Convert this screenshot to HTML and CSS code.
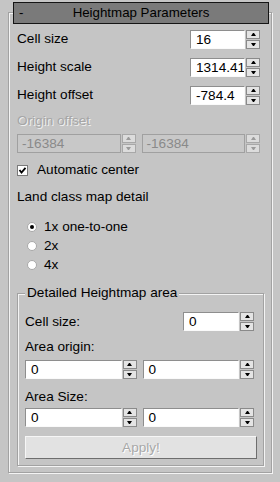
FILE: index.html
```html
<!DOCTYPE html>
<html>
<head>
<meta charset="utf-8">
<link rel="stylesheet" href="styles.css">
</head>
<body>
<div class="app">
  <div class="header"><span class="collapse">-</span><span class="title">Heightmap Parameters</span><span></span></div>
  <div class="rollout">
    <div class="row"><span>Cell size</span>
      <div class="spinner"><div class="field">16</div><div class="btns"><span class="btn up"></span><span class="btn down"></span></div></div>
    </div>
    <div class="row"><span>Height scale</span>
      <div class="spinner"><div class="field">1314.41</div><div class="btns"><span class="btn up"></span><span class="btn down"></span></div></div>
    </div>
    <div class="row"><span>Height offset</span>
      <div class="spinner"><div class="field">-784.4</div><div class="btns"><span class="btn up"></span><span class="btn down"></span></div></div>
    </div>
    <div class="label disabled origin">Origin offset</div>
    <div class="pair">
      <div class="spinner off"><div class="field">-16384</div><div class="btns"><span class="btn up"></span><span class="btn down"></span></div></div>
      <div class="spinner off"><div class="field">-16384</div><div class="btns"><span class="btn up"></span><span class="btn down"></span></div></div>
    </div>
    <div class="check">
      <svg width="11" height="11" viewBox="0 0 11 11"><rect x="0.5" y="0.5" width="10" height="10" fill="#fff" stroke="#7a7a7a"/><polyline points="2.5,5 4.5,7.5 8.5,2.8" fill="none" stroke="#000" stroke-width="1.8"/></svg>
      <span>Automatic center</span>
    </div>
    <div class="label land">Land class map detail</div>
    <div class="radios">
      <div class="radio"><svg width="10" height="10" viewBox="0 0 10 10"><circle cx="5" cy="5" r="4.5" fill="#fff" stroke="#a8a8a8"/><circle cx="5" cy="5" r="2" fill="#000"/></svg><span>1x one-to-one</span></div>
      <div class="radio"><svg width="10" height="10" viewBox="0 0 10 10"><circle cx="5" cy="5" r="4.5" fill="#fff" stroke="#a8a8a8"/></svg><span>2x</span></div>
      <div class="radio"><svg width="10" height="10" viewBox="0 0 10 10"><circle cx="5" cy="5" r="4.5" fill="#fff" stroke="#a8a8a8"/></svg><span>4x</span></div>
    </div>
    <fieldset class="group">
      <legend>Detailed Heightmap area</legend>
      <div class="grow"><span>Cell size:</span>
        <div class="spinner small"><div class="field">0</div><div class="btns"><span class="btn up"></span><span class="btn down"></span></div></div>
      </div>
      <div class="label area-origin">Area origin:</div>
      <div class="pair p1">
        <div class="spinner"><div class="field">0</div><div class="btns"><span class="btn up"></span><span class="btn down"></span></div></div>
        <div class="spinner"><div class="field">0</div><div class="btns"><span class="btn up"></span><span class="btn down"></span></div></div>
      </div>
      <div class="label area-size">Area Size:</div>
      <div class="pair p2">
        <div class="spinner"><div class="field">0</div><div class="btns"><span class="btn up"></span><span class="btn down"></span></div></div>
        <div class="spinner"><div class="field">0</div><div class="btns"><span class="btn up"></span><span class="btn down"></span></div></div>
      </div>
      <div class="apply">Apply!</div>
    </fieldset>
  </div>
</div>
</body>
</html>
```
FILE: styles.css
```css
* { box-sizing: border-box; }
html, body { margin: 0; }
body {
  width: 280px;
  height: 482px;
  overflow: hidden;
  background: #c5c5c5;
  font: 13.6px/16px "Liberation Sans", Arial, sans-serif;
  color: #000;
}
.app { padding-top: 2px; }
.header {
  position: relative;
  z-index: 1;
  margin: 0 11px 0 13px;
  height: 22px;
  background: #7a7a7a;
  border: 1px solid #151515;
  display: grid;
  grid-template-columns: 1fr auto 1fr;
  align-items: center;
  font-size: 13.3px;
}
.collapse { padding-left: 5px; }
.rollout {
  margin: -12px 8px 0;
  border: 1px solid #a2a2a2;
  box-shadow: 1px 1px 0 #f4f4f4, inset 1px 1px 0 #f4f4f4;
  padding: 16px 11px 6px 8px;
}
.row {
  display: flex;
  justify-content: space-between;
  align-items: center;
  height: 20px;
  margin-bottom: 8px;
}
.spinner {
  display: flex;
  gap: 1px;
  height: 19px;
  width: 70px;
}
.spinner.small { width: 71px; }
.field {
  flex: 1;
  min-width: 0;
  background: #fff;
  border: 1px solid;
  border-color: #8e8e8e #fafafa #fafafa #8e8e8e;
  padding-left: 5px;
  line-height: 17px;
  overflow: hidden;
  white-space: nowrap;
}
.btns {
  width: 14px;
  display: flex;
  flex-direction: column;
  gap: 1px;
}
.btn {
  flex: 1;
  background: #e4e4e4;
  border: 1px solid #8a8a8a;
  display: flex;
  align-items: center;
  justify-content: center;
}
.btn::after {
  content: "";
  width: 1px;
  border-left: 2px solid transparent;
  border-right: 2px solid transparent;
}
.btn.up::after { border-bottom: 3px solid #000; }
.btn.down::after { border-top: 3px solid #000; }
.label { height: 16px; }
.disabled { color: #a6a6a6; text-shadow: 1px 1px 0 #f0f0f0; }
.origin { margin-top: 0; }
.pair {
  display: grid;
  grid-template-columns: 1fr 1fr;
  column-gap: 6px;
  height: 19px;
  margin-top: 5px;
}
.pair .spinner { width: auto; }
.spinner.off .field {
  background: #c8c8c8;
  border-color: #a0a0a0;
  color: #8a8a8a;
  padding-left: 4px;
}
.spinner.off .btn { background: #dcdcdc; border-color: #a8a8a8; }
.spinner.off .btn.up::after { border-bottom-color: #9a9a9a; }
.spinner.off .btn.down::after { border-top-color: #9a9a9a; }
.check {
  display: flex;
  align-items: center;
  gap: 9px;
  height: 16px;
  margin-top: 9px;
}
.check svg, .radio svg { display: block; flex: none; }
.land { margin-top: 11px; }
.radios { margin-top: 12px; padding-left: 10px; }
.radio {
  display: flex;
  align-items: center;
  gap: 7px;
  height: 19px;
}
.group {
  margin: 11px -4px 0 0;
  padding: 11px 9px 6px 7px;
  border: 1px solid #a2a2a2;
  box-shadow: 1px 1px 0 #f4f4f4, inset 1px 1px 0 #f4f4f4;
  min-width: 0;
}
.group legend {
  padding: 0 2px;
  background: #c5c5c5;
  line-height: 16px;
}
.grow {
  display: flex;
  justify-content: space-between;
  align-items: center;
  height: 19px;
}
.area-origin { margin-top: 8px; }
.p1 { margin-top: 5px; }
.area-size { margin-top: 10px; }
.p2 { margin-top: 3px; }
.apply {
  margin: 9px -3px 0 0;
  height: 23px;
  background: #e2e2e2;
  border: 1px solid;
  border-color: #f6f6f6 #6e6e6e #6e6e6e #f6f6f6;
  color: #a8a8a8;
  text-shadow: 1px 1px 0 #fff;
  text-align: center;
  line-height: 21px;
}
```
